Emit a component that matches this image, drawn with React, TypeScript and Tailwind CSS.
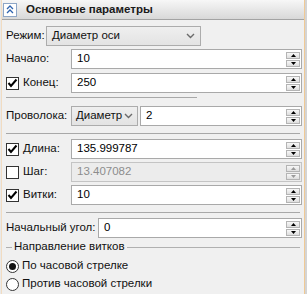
import React from "react";

const font = { fontFamily: '"Liberation Sans", Arial, sans-serif' };

function Spinner({ disabled }: { disabled?: boolean }) {
  const arrow = disabled ? "#9a9a9a" : "#000";
  return (
    <div className="flex flex-col gap-[1px] mr-[1px] shrink-0">
      <div className="w-[14px] h-[7px] border border-[#b4b4b4] bg-gradient-to-b from-[#f8f8f8] to-[#dedede] flex items-center justify-center">
        <svg width="5" height="3" viewBox="0 0 5 3">
          <polygon points="2.5,0 5,3 0,3" fill={arrow} />
        </svg>
      </div>
      <div className="w-[14px] h-[7px] border border-[#b4b4b4] bg-gradient-to-b from-[#f8f8f8] to-[#dedede] flex items-center justify-center">
        <svg width="5" height="3" viewBox="0 0 5 3">
          <polygon points="0,0 5,0 2.5,3" fill={arrow} />
        </svg>
      </div>
    </div>
  );
}

function NumInput({ value, disabled, className }: { value: string; disabled?: boolean; className?: string }) {
  return (
    <div
      className={
        "h-[20px] min-w-0 border flex items-center justify-between " +
        (disabled ? "border-[#c4c4c4] bg-[#ececec] text-[#8c8c8c]" : "border-[#a9a9a9] bg-white text-black") +
        " " +
        (className ?? "")
      }
    >
      <span className="pl-[5px] whitespace-nowrap">{value}</span>
      <Spinner disabled={disabled} />
    </div>
  );
}

function Chevron() {
  return (
    <svg width="9" height="6" viewBox="0 0 9 6" className="shrink-0">
      <polyline points="1,1 4.5,4.5 8,1" fill="none" stroke="#6b6b6b" strokeWidth="1.4" />
    </svg>
  );
}

function Check({ checked }: { checked: boolean }) {
  return (
    <div className="w-[13px] h-[13px] shrink-0 border border-[#333] bg-white flex items-center justify-center">
      {checked && (
        <svg width="11" height="10" viewBox="0 0 11 10">
          <polyline points="1.5,5 4,8 9.5,1.5" fill="none" stroke="#000" strokeWidth="2" />
        </svg>
      )}
    </div>
  );
}

function Radio({ checked }: { checked: boolean }) {
  return (
    <div className="w-[13px] h-[13px] shrink-0 rounded-full border border-[#333] bg-white flex items-center justify-center">
      {checked && <div className="w-[7px] h-[7px] rounded-full bg-[#111]" />}
    </div>
  );
}

export default function App() {
  return (
    <div className="w-[307px] h-[294px] flex bg-[#d4d4d4] text-[11.5px] text-[#111] whitespace-nowrap" style={font}>
      <div className="w-[1px] bg-[#e9e9e9]" />
      <div className="flex-1 flex flex-col bg-[#f0f0f0] border-l border-r border-l-[#f1dcc2] border-r-[#f0c994]">
        <div className="h-[20px] flex items-center border-b border-[#a3a3a3] bg-gradient-to-b from-[#f7f7f7] to-[#d8d8d8]">
          <div className="ml-[1px] w-[14px] h-[14px] border border-[#8ea6c6] bg-white flex items-center justify-center">
            <svg width="8" height="9" viewBox="0 0 8 9">
              <polyline points="1,4 4,1 7,4" fill="none" stroke="#2f63ae" strokeWidth="1.3" />
              <polyline points="1,8 4,5 7,8" fill="none" stroke="#2f63ae" strokeWidth="1.3" />
            </svg>
          </div>
          <span className="ml-[9px] font-bold text-[11.5px] text-[#1a1a1a]">Основные параметры</span>
        </div>

        <div className="flex flex-col pl-[4px] pr-[2px]">
          <div className="mt-[6px] flex items-center h-[20px]">
            <span className="w-[40px] shrink-0">Режим:</span>
            <div className="w-[155px] h-[20px] border border-[#acacac] bg-gradient-to-b from-[#efefef] to-[#e3e3e3] flex items-center justify-between px-[5px]">
              <span>Диаметр оси</span>
              <Chevron />
            </div>
          </div>

          <div className="mt-[3px] flex items-center h-[20px]">
            <span className="w-[65px] shrink-0">Начало:</span>
            <NumInput value="10" className="flex-1" />
          </div>

          <div className="mt-[4px] flex items-center h-[20px]">
            <div className="w-[65px] shrink-0 flex items-center gap-[4px]">
              <Check checked />
              <span>Конец:</span>
            </div>
            <NumInput value="250" className="flex-1" />
          </div>

          <div className="mt-[4px] h-[1px] w-[191px] bg-[#a8a8a8]" />

          <div className="mt-[8px] flex items-center h-[20px]">
            <span className="w-[65px] shrink-0">Проволока:</span>
            <div className="w-[67px] shrink-0 h-[20px] border border-[#acacac] bg-gradient-to-b from-[#efefef] to-[#e3e3e3] flex items-center justify-between px-[4px]">
              <span>Диаметр</span>
              <Chevron />
            </div>
            <NumInput value="2" className="flex-1 ml-[2px]" />
          </div>

          <div className="mt-[7px] h-[1px] w-[294px] bg-[#a8a8a8]" />

          <div className="mt-[5px] flex items-center h-[20px]">
            <div className="w-[65px] shrink-0 flex items-center gap-[4px]">
              <Check checked />
              <span>Длина:</span>
            </div>
            <NumInput value="135.999787" className="flex-1" />
          </div>

          <div className="mt-[3px] flex items-center h-[20px]">
            <div className="w-[65px] shrink-0 flex items-center gap-[4px]">
              <Check checked={false} />
              <span>Шаг:</span>
            </div>
            <NumInput value="13.407082" disabled className="flex-1" />
          </div>

          <div className="mt-[3px] flex items-center h-[20px]">
            <div className="w-[65px] shrink-0 flex items-center gap-[4px]">
              <Check checked />
              <span>Витки:</span>
            </div>
            <NumInput value="10" className="flex-1" />
          </div>

          <div className="mt-[7px] h-[1px] w-[294px] bg-[#a8a8a8]" />

          <div className="mt-[5px] flex items-center h-[20px]">
            <span className="w-[92px] shrink-0">Начальный угол:</span>
            <NumInput value="0" className="flex-1" />
          </div>

          <div className="mt-[2px] flex items-center h-[14px]">
            <div className="w-[6px] h-[1px] bg-[#b0b0b0]" />
            <span className="px-[2px]">Направление витков</span>
            <div className="flex-1 h-[1px] bg-[#b0b0b0] mr-[2px]" />
          </div>

          <div className="mt-[4px] flex items-center h-[16px] gap-[3px]">
            <Radio checked />
            <span>По часовой стрелке</span>
          </div>

          <div className="mt-[2px] flex items-center h-[16px] gap-[3px]">
            <Radio checked={false} />
            <span>Против часовой стрелки</span>
          </div>
        </div>
      </div>
      <div className="w-[2px]" />
    </div>
  );
}
